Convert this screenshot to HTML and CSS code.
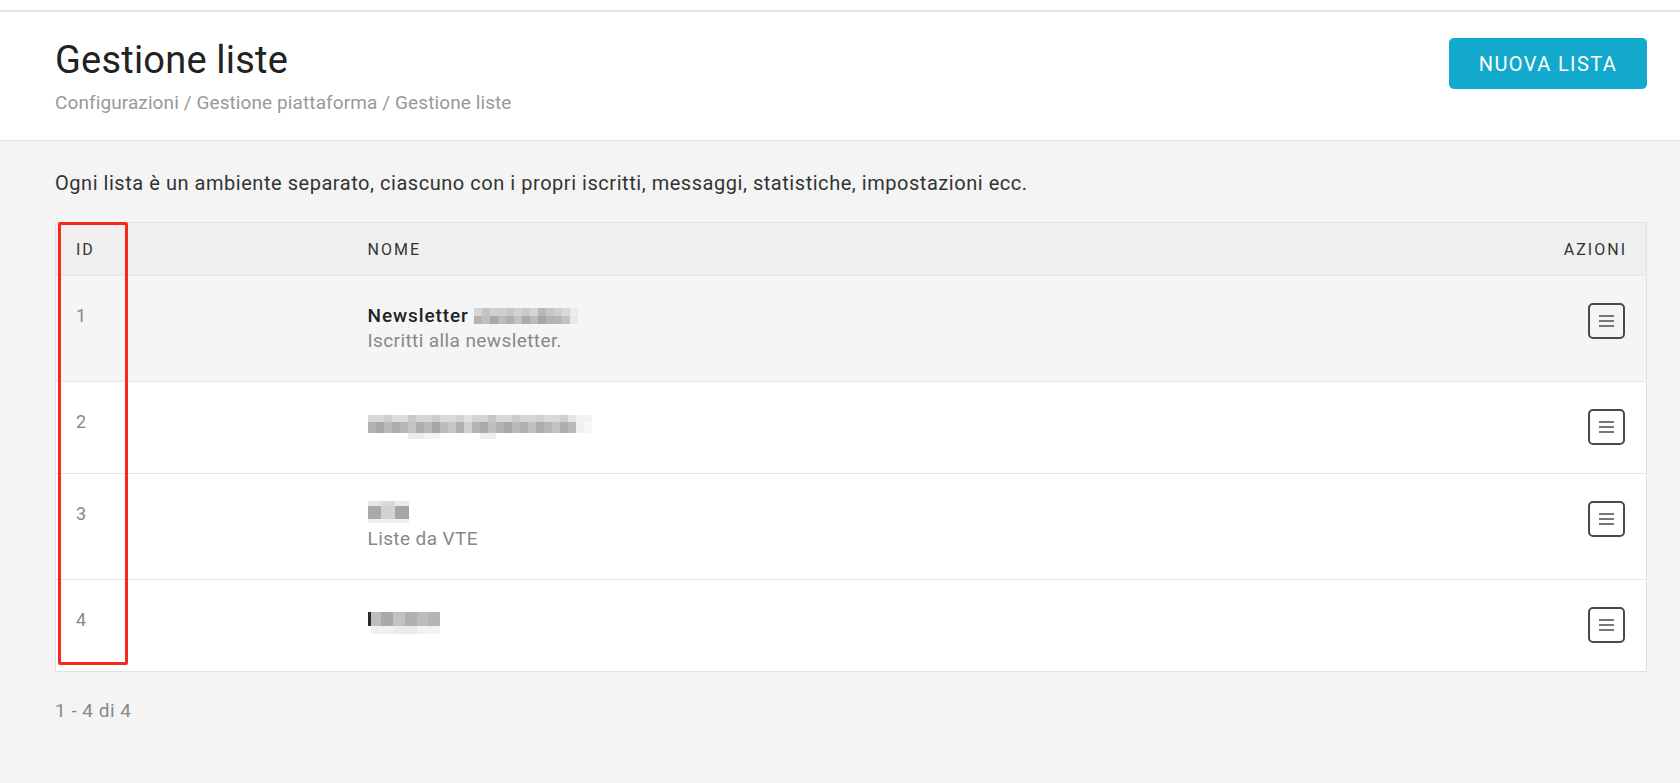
FILE: index.html
```html
<!DOCTYPE html>
<html lang="it">

<head>
  <meta charset="UTF-8">
  <meta name="viewport" content="width=device-width, initial-scale=1.0">
  <title>Gestione liste</title>
  <link rel="stylesheet" href="styles.css">
</head>

<body>
  <div class="topbar"></div>

  <header class="page-head">
    <div class="head-text">
      <h1>Gestione liste</h1>
      <nav class="crumbs">Configurazioni / Gestione piattaforma / Gestione liste</nav>
    </div>
    <button class="btn-primary">NUOVA LISTA</button>
  </header>

  <main class="content">
    <p class="intro">Ogni lista è un ambiente separato, ciascuno con i propri iscritti, messaggi, statistiche, impostazioni ecc.</p>

    <div class="table-wrap">
      <table class="lists">
        <colgroup>
          <col class="c-id">
          <col>
          <col class="c-act">
        </colgroup>
        <thead>
          <tr>
            <th>ID</th>
            <th>NOME</th>
            <th class="act">AZIONI</th>
          </tr>
        </thead>
        <tbody>
          <!-- Lista 1 -->
          <tr class="hover">
            <td class="id">1</td>
            <td class="name">
              <div class="title">Newsletter
                <svg class="mosaic" width="104" height="16" viewBox="0 0 104 16">
                  <rect x="0" y="0" width="8" height="8" fill="#d6d6d6"/><rect x="8" y="0" width="8" height="8" fill="#c4c4c4"/>
                  <rect x="16" y="0" width="8" height="8" fill="#d0d0d0"/><rect x="24" y="0" width="8" height="8" fill="#cfcfcf"/>
                  <rect x="32" y="0" width="8" height="8" fill="#c8c8c8"/><rect x="40" y="0" width="8" height="8" fill="#d2d2d2"/>
                  <rect x="48" y="0" width="8" height="8" fill="#cacaca"/><rect x="56" y="0" width="8" height="8" fill="#d4d4d4"/>
                  <rect x="64" y="0" width="8" height="8" fill="#b8b8b8"/><rect x="72" y="0" width="8" height="8" fill="#c6c6c6"/>
                  <rect x="80" y="0" width="8" height="8" fill="#cfcfcf"/><rect x="88" y="0" width="8" height="8" fill="#d8d8d8"/>
                  <rect x="96" y="0" width="8" height="8" fill="#ececec"/>
                  <rect x="0" y="8" width="8" height="8" fill="#b4b4b4"/><rect x="8" y="8" width="8" height="8" fill="#c0c0c0"/>
                  <rect x="16" y="8" width="8" height="8" fill="#a8a8a8"/><rect x="24" y="8" width="8" height="8" fill="#bcbcbc"/>
                  <rect x="32" y="8" width="8" height="8" fill="#b0b0b0"/><rect x="40" y="8" width="8" height="8" fill="#c2c2c2"/>
                  <rect x="48" y="8" width="8" height="8" fill="#aaaaaa"/><rect x="56" y="8" width="8" height="8" fill="#bbbbbb"/>
                  <rect x="64" y="8" width="8" height="8" fill="#a6a6a6"/><rect x="72" y="8" width="8" height="8" fill="#b2b2b2"/>
                  <rect x="80" y="8" width="8" height="8" fill="#b6b6b6"/><rect x="88" y="8" width="8" height="8" fill="#c4c4c4"/>
                  <rect x="96" y="8" width="8" height="8" fill="#e8e8e8"/>
                </svg>
              </div>
              <div class="sub">Iscritti alla newsletter.</div>
            </td>
            <td class="act"><button class="menu-btn"><span></span><span></span><span></span></button></td>
          </tr>

          <!-- Lista 2 -->
          <tr>
            <td class="id">2</td>
            <td class="name">
              <svg class="mosaic block" width="224" height="30" viewBox="0 0 224 30">
                <rect x="0" y="6" width="16" height="7" fill="#d9d9d9"/><rect x="16" y="6" width="8" height="7" fill="#cfcfcf"/>
                <rect x="24" y="6" width="16" height="7" fill="#dcdcdc"/><rect x="40" y="6" width="8" height="7" fill="#c9c9c9"/>
                <rect x="48" y="6" width="16" height="7" fill="#d6d6d6"/><rect x="64" y="6" width="8" height="7" fill="#cdcdcd"/>
                <rect x="72" y="6" width="16" height="7" fill="#dadada"/><rect x="88" y="6" width="8" height="7" fill="#d2d2d2"/>
                <rect x="96" y="6" width="8" height="7" fill="#e2e2e2"/><rect x="104" y="6" width="16" height="7" fill="#d4d4d4"/>
                <rect x="120" y="6" width="8" height="7" fill="#c6c6c6"/><rect x="128" y="6" width="16" height="7" fill="#d8d8d8"/>
                <rect x="144" y="6" width="8" height="7" fill="#cccccc"/><rect x="152" y="6" width="16" height="7" fill="#d6d6d6"/>
                <rect x="168" y="6" width="8" height="7" fill="#d0d0d0"/><rect x="176" y="6" width="16" height="7" fill="#dadada"/>
                <rect x="192" y="6" width="8" height="7" fill="#cecece"/><rect x="200" y="6" width="8" height="7" fill="#e6e6e6"/>
                <rect x="208" y="6" width="16" height="7" fill="#f2f2f2"/>
                <rect x="0" y="13" width="8" height="11" fill="#b2b2b2"/><rect x="8" y="13" width="8" height="11" fill="#a8a8a8"/>
                <rect x="16" y="13" width="8" height="11" fill="#bababa"/><rect x="24" y="13" width="8" height="11" fill="#acacac"/>
                <rect x="32" y="13" width="8" height="11" fill="#b6b6b6"/><rect x="40" y="13" width="8" height="11" fill="#c4c4c4"/>
                <rect x="48" y="13" width="8" height="11" fill="#aeaeae"/><rect x="56" y="13" width="8" height="11" fill="#b8b8b8"/>
                <rect x="64" y="13" width="8" height="11" fill="#a6a6a6"/><rect x="72" y="13" width="8" height="11" fill="#bcbcbc"/>
                <rect x="80" y="13" width="8" height="11" fill="#c6c6c6"/><rect x="88" y="13" width="8" height="11" fill="#b0b0b0"/>
                <rect x="96" y="13" width="8" height="11" fill="#d0d0d0"/><rect x="104" y="13" width="8" height="11" fill="#b4b4b4"/>
                <rect x="112" y="13" width="8" height="11" fill="#aaaaaa"/><rect x="120" y="13" width="8" height="11" fill="#bebebe"/>
                <rect x="128" y="13" width="8" height="11" fill="#b2b2b2"/><rect x="136" y="13" width="8" height="11" fill="#a8a8a8"/>
                <rect x="144" y="13" width="8" height="11" fill="#bababa"/><rect x="152" y="13" width="8" height="11" fill="#b0b0b0"/>
                <rect x="160" y="13" width="8" height="11" fill="#c0c0c0"/><rect x="168" y="13" width="8" height="11" fill="#acacac"/>
                <rect x="176" y="13" width="8" height="11" fill="#b6b6b6"/><rect x="184" y="13" width="8" height="11" fill="#c2c2c2"/>
                <rect x="192" y="13" width="8" height="11" fill="#aeaeae"/><rect x="200" y="13" width="8" height="11" fill="#b8b8b8"/>
                <rect x="208" y="13" width="8" height="11" fill="#f0f0f0"/><rect x="216" y="13" width="8" height="11" fill="#f7f7f7"/>
                <rect x="40" y="24" width="16" height="6" fill="#ececec"/><rect x="56" y="24" width="16" height="6" fill="#f3f3f3"/>
                <rect x="112" y="24" width="16" height="6" fill="#eeeeee"/>
              </svg>
            </td>
            <td class="act"><button class="menu-btn"><span></span><span></span><span></span></button></td>
          </tr>

          <!-- Lista 3 -->
          <tr>
            <td class="id">3</td>
            <td class="name">
              <svg class="mosaic block" width="41" height="25" viewBox="0 0 41 25">
                <rect x="0" y="0" width="13" height="5" fill="#e6e6e6"/><rect x="13" y="0" width="14" height="5" fill="#dadada"/>
                <rect x="27" y="0" width="14" height="5" fill="#eaeaea"/>
                <rect x="0" y="5" width="13" height="13" fill="#a9a9a9"/><rect x="13" y="5" width="14" height="13" fill="#d2d2d2"/>
                <rect x="27" y="5" width="14" height="13" fill="#a5a5a5"/>
                <rect x="0" y="18" width="41" height="4" fill="#f0f0f0"/>
              </svg>
              <div class="sub">Liste da VTE</div>
            </td>
            <td class="act"><button class="menu-btn"><span></span><span></span><span></span></button></td>
          </tr>

          <!-- Lista 4 -->
          <tr>
            <td class="id">4</td>
            <td class="name">
              <svg class="mosaic block" width="72" height="30" viewBox="0 0 72 30">
                <rect x="0" y="5" width="3" height="14" fill="#2a2a2a"/>
                <rect x="3" y="5" width="10" height="14" fill="#bdbdbd"/><rect x="13" y="5" width="12" height="14" fill="#a9a9a9"/>
                <rect x="25" y="5" width="12" height="14" fill="#c2c2c2"/><rect x="37" y="5" width="12" height="14" fill="#b0b0b0"/>
                <rect x="49" y="5" width="11" height="14" fill="#bcbcbc"/><rect x="60" y="5" width="12" height="14" fill="#b4b4b4"/>
                <rect x="3" y="19" width="22" height="8" fill="#f0f0f0"/><rect x="25" y="19" width="24" height="8" fill="#ebebeb"/>
                <rect x="49" y="19" width="23" height="8" fill="#f2f2f2"/>
              </svg>
            </td>
            <td class="act"><button class="menu-btn"><span></span><span></span><span></span></button></td>
          </tr>
        </tbody>
      </table>
      <div class="highlight"></div>
    </div>

    <p class="pager">1 - 4 di 4</p>
  </main>
</body>

</html>
```

FILE: styles.css
```css
body {
  margin: 0;
  font-family: Roboto, "Liberation Sans", sans-serif;
  background-color: #f4f4f4;
  color: #333;
}

.topbar {
  height: 10px;
  background-color: #fff;
  border-bottom: 2px solid #e3e3e7;
}

/* Page header */
.page-head {
  display: flex;
  justify-content: space-between;
  align-items: flex-start;
  background-color: #fff;
  padding: 26px 33px 25px 55px;
  border-bottom: 1px solid #e1e1e5;
}

.page-head h1 {
  margin: 0;
  font-size: 38px;
  font-weight: 400;
  line-height: 44px;
  letter-spacing: 0.2px;
  color: #222;
}

.crumbs {
  margin-top: 9px;
  font-size: 19px;
  line-height: 24px;
  letter-spacing: 0.1px;
  color: #999;
}

.btn-primary {
  width: 198px;
  height: 51px;
  background-color: #12a9cc;
  color: #fff;
  border: none;
  border-radius: 5px;
  font-family: Roboto, sans-serif;
  font-size: 20px;
  letter-spacing: 1.4px;
  cursor: pointer;
}

/* Content */
.content {
  padding: 29px 33px 40px 55px;
}

.intro {
  margin: 0 0 26px;
  font-size: 20px;
  line-height: 26px;
  letter-spacing: 0.54px;
}

.table-wrap {
  position: relative;
}

.lists {
  width: 100%;
  table-layout: fixed;
  border-collapse: collapse;
  border: 1px solid #e2e2e6;
  background-color: #fff;
}

.c-id {
  width: 292px;
}

.c-act {
  width: 200px;
}

.lists th {
  height: 52px;
  padding: 0 20px;
  background-color: #efefef;
  font-size: 16px;
  font-weight: 400;
  letter-spacing: 2px;
  text-align: left;
  color: #333;
}

.lists td {
  padding: 27px 20px 28px;
  vertical-align: top;
  border-top: 1px solid #e6e6ea;
  font-size: 19px;
  line-height: 25px;
  letter-spacing: 0.4px;
}

.lists .act {
  text-align: right;
  padding-right: 21px;
}

.lists th.act {
  padding-right: 19px;
}

.lists tr.hover td {
  background-color: #f5f5f5;
}

.lists td.id {
  font-size: 18px;
  color: #888;
}

.name .title {
  font-weight: 500;
  letter-spacing: 0.9px;
  color: #222;
}

.name .sub {
  color: #888;
}

.mosaic {
  vertical-align: -2px;
}

.mosaic.block {
  display: block;
}

/* Row menu button */
.menu-btn {
  display: flex;
  flex-direction: column;
  justify-content: center;
  align-items: center;
  gap: 3px;
  width: 37px;
  height: 36px;
  margin-left: auto;
  padding: 0;
  background: transparent;
  border: 2px solid #4a4a4a;
  border-radius: 5px;
  cursor: pointer;
}

.menu-btn span {
  display: block;
  width: 15px;
  height: 2px;
  background-color: #777;
}

/* red marker over the ID column */
.highlight {
  position: absolute;
  top: 0;
  left: 3px;
  width: 70px;
  height: 443px;
  box-sizing: border-box;
  border: 3px solid #f42b1b;
  border-radius: 2px;
}

.pager {
  margin: 26px 0 0;
  font-size: 19px;
  line-height: 26px;
  letter-spacing: 0.5px;
  color: #888;
}
```
